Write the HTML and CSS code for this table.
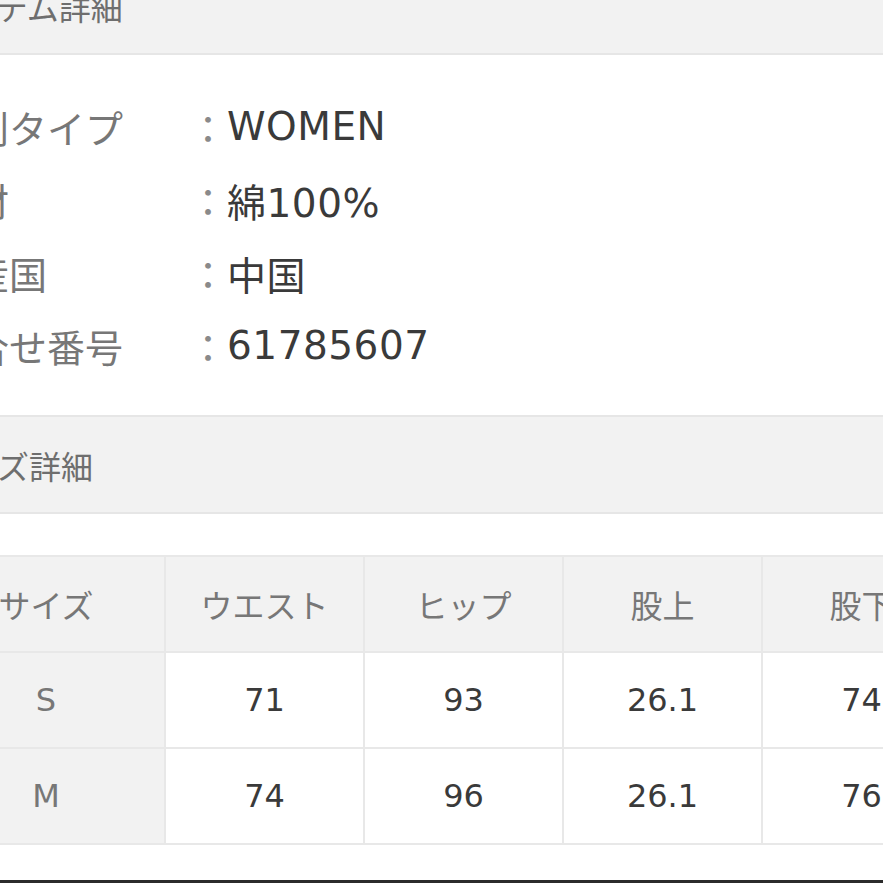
FILE: index.html
```html
<!DOCTYPE html>
<html lang="ja">
<head>
<meta charset="utf-8">
<title>アイテム詳細</title>
<link rel="stylesheet" href="styles.css">
</head>
<body>
<div class="page">
  <div class="band band-first"><span class="band-title">アイテム詳細</span></div>
  <div class="spec-list">
    <div class="spec-row"><span class="spec-label">性別タイプ</span><span class="spec-colon">：</span><span class="spec-value">WOMEN</span></div>
    <div class="spec-row"><span class="spec-label">素材</span><span class="spec-colon">：</span><span class="spec-value">綿100%</span></div>
    <div class="spec-row"><span class="spec-label">原産国</span><span class="spec-colon">：</span><span class="spec-value">中国</span></div>
    <div class="spec-row"><span class="spec-label">問合せ番号</span><span class="spec-colon">：</span><span class="spec-value">61785607</span></div>
  </div>
  <div class="band band-second"><span class="band-title">サイズ詳細</span></div>
  <table class="size-table">
    <colgroup>
      <col class="col-size">
      <col class="col-data">
      <col class="col-data">
      <col class="col-data">
      <col class="col-data">
    </colgroup>
    <thead>
      <tr><th>サイズ</th><th>ウエスト</th><th>ヒップ</th><th>股上</th><th>股下</th></tr>
    </thead>
    <tbody>
      <tr><th>S</th><td>71</td><td>93</td><td>26.1</td><td>74</td></tr>
      <tr><th>M</th><td>74</td><td>96</td><td>26.1</td><td>76</td></tr>
    </tbody>
  </table>
  <div class="bottom-bar"></div>
</div>
</body>
</html>
```
FILE: styles.css
```css
html, body {
  margin: 0;
  padding: 0;
  background: #ffffff;
}
body {
  width: 883px;
  height: 883px;
  overflow: hidden;
  font-family: "DejaVu Sans", "Noto Sans CJK JP", sans-serif;
}
.page {
  margin-top: -42px;
  margin-left: -74px;
  width: 1100px;
  display: flex;
  flex-direction: column;
}
.band {
  height: 95px;
  background: #f2f2f2;
  border-bottom: 2px solid #e6e6e6;
  display: flex;
  align-items: center;
  padding-left: 8px;
  font-family: "Noto Sans CJK JP", sans-serif;
  font-size: 32px;
  color: #6e6e6e;
}
.band-second {
  border-top: 2px solid #e6e6e6;
}
.spec-list {
  padding: 35px 0 33px 7px;
  display: flex;
  flex-direction: column;
}
.spec-row {
  height: 73px;
  display: flex;
  align-items: center;
  font-size: 38px;
  white-space: nowrap;
}
.spec-label {
  width: 256px;
  flex: none;
  font-family: "Noto Sans CJK JP", sans-serif;
  color: #777777;
}
.spec-colon {
  font-family: "Noto Sans CJK JP", sans-serif;
  color: #8a8a8a;
}
.spec-value {
  color: #3a3a3a;
  font-size: 39px;
  letter-spacing: 0.5px;
}
.size-table {
  margin-top: 41px;
  border-collapse: collapse;
  table-layout: fixed;
  width: 1034px;
  font-size: 32px;
}
.col-size { width: 238px; }
.col-data { width: 199px; }
.size-table th,
.size-table td {
  height: 94px;
  padding: 0;
  border: 2px solid #e8e8e8;
  text-align: center;
  vertical-align: middle;
  white-space: nowrap;
}
.size-table th {
  background: #f2f2f2;
  color: #777777;
  font-weight: normal;
  font-family: "Noto Sans CJK JP", sans-serif;
}
.size-table tbody th {
  font-family: "DejaVu Sans", sans-serif;
}
.size-table td {
  background: #ffffff;
  color: #3a3a3a;
}
.bottom-bar {
  margin-top: 35px;
  height: 3px;
  background: #2b2b2b;
}
```
